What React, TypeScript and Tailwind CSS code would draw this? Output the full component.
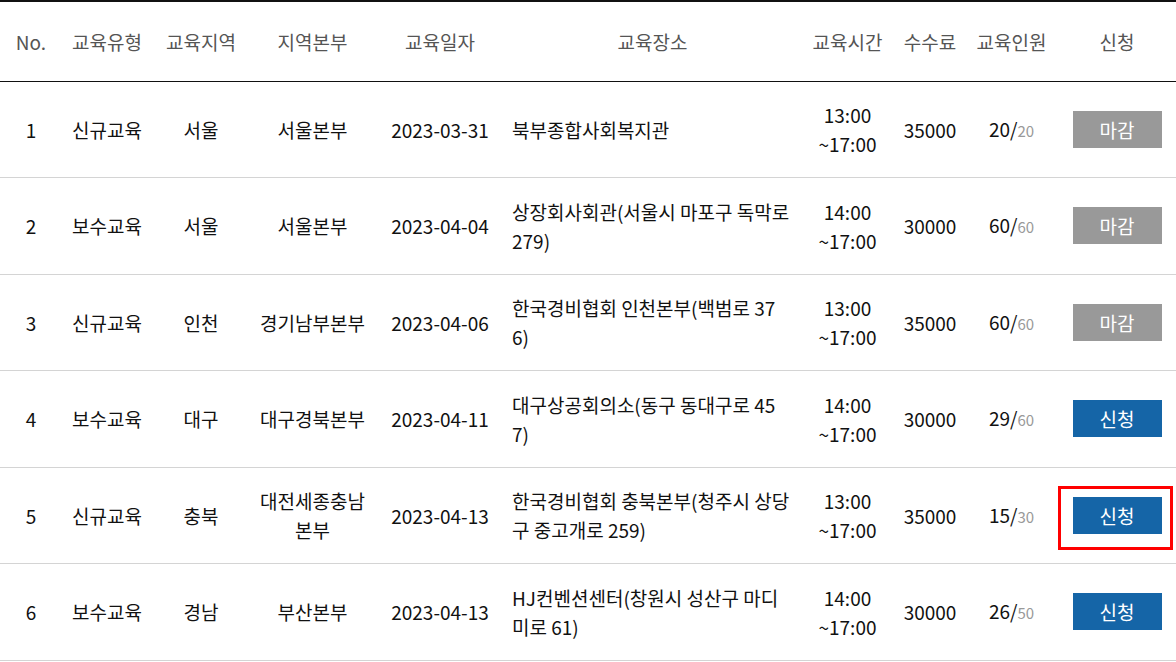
import React from "react";

type Row = {
  no: number;
  type: string;
  region: string;
  hq: string;
  date: string;
  place: string;
  start: string;
  fee: string;
  cur: string;
  max: string;
  open: boolean;
  highlight?: boolean;
};

const rows: Row[] = [
  { no: 1, type: "신규교육", region: "서울", hq: "서울본부", date: "2023-03-31", place: "북부종합사회복지관", start: "13:00", fee: "35000", cur: "20", max: "20", open: false },
  { no: 2, type: "보수교육", region: "서울", hq: "서울본부", date: "2023-04-04", place: "상장회사회관(서울시 마포구 독막로 279)", start: "14:00", fee: "30000", cur: "60", max: "60", open: false },
  { no: 3, type: "신규교육", region: "인천", hq: "경기남부본부", date: "2023-04-06", place: "한국경비협회 인천본부(백범로 376)", start: "13:00", fee: "35000", cur: "60", max: "60", open: false },
  { no: 4, type: "보수교육", region: "대구", hq: "대구경북본부", date: "2023-04-11", place: "대구상공회의소(동구 동대구로 457)", start: "14:00", fee: "30000", cur: "29", max: "60", open: true },
  { no: 5, type: "신규교육", region: "충북", hq: "대전세종충남본부", date: "2023-04-13", place: "한국경비협회 충북본부(청주시 상당구 중고개로 259)", start: "13:00", fee: "35000", cur: "15", max: "30", open: true, highlight: true },
  { no: 6, type: "보수교육", region: "경남", hq: "부산본부", date: "2023-04-13", place: "HJ컨벤션센터(창원시 성산구 마디미로 61)", start: "14:00", fee: "30000", cur: "26", max: "50", open: true },
];

const headers = ["No.", "교육유형", "교육지역", "지역본부", "교육일자", "교육장소", "교육시간", "수수료", "교육인원", "신청"];

export default function App() {
  return (
    <div
      className="w-[1176px] h-[662px] overflow-hidden bg-white"
      style={{ fontFamily: '"Noto Sans CJK KR", "Noto Sans", sans-serif' }}
    >
      <table className="w-[1176px] table-fixed border-collapse text-[19px] leading-[29px] text-[#111]">
        <colgroup>
          <col className="w-[62px]" />
          <col className="w-[90px]" />
          <col className="w-[98px]" />
          <col className="w-[125px]" />
          <col className="w-[130px]" />
          <col className="w-[295px]" />
          <col className="w-[95px]" />
          <col className="w-[70px]" />
          <col className="w-[93px]" />
          <col className="w-[118px]" />
        </colgroup>
        <thead>
          <tr className="border-t-2 border-t-[#111] border-b border-b-[#111]">
            {headers.map((h) => (
              <th key={h} className="h-[80px] p-0 text-center font-normal text-[#555] align-middle">
                {h}
              </th>
            ))}
          </tr>
        </thead>
        <tbody>
          {rows.map((r) => (
            <tr key={r.no} className="border-b border-b-[#d4d4d4]">
              <td className="h-[96.5px] p-0 text-center align-middle">{r.no}</td>
              <td className="p-0 text-center align-middle">{r.type}</td>
              <td className="p-0 text-center align-middle">{r.region}</td>
              <td className="px-[4px] text-center align-middle">{r.hq}</td>
              <td className="p-0 text-center align-middle">{r.date}</td>
              <td className="pl-[7px] pr-[10px] text-left align-middle break-all">{r.place}</td>
              <td className="p-0 text-center align-middle">
                {r.start}
                <br />~17:00
              </td>
              <td className="p-0 text-center align-middle">{r.fee}</td>
              <td className="p-0 text-center align-middle">
                {r.cur}/<span className="text-[15px] text-[#999]">{r.max}</span>
              </td>
              <td className="p-0 align-middle">
                <div className="flex justify-center">
                  <div
                    className={
                      "relative flex h-[37px] w-[89px] items-center justify-center text-white " +
                      (r.open ? "bg-[#1565a7]" : "bg-[#999999]")
                    }
                  >
                    {r.open ? "신청" : "마감"}
                    {r.highlight && (
                      <div className="absolute left-[-15px] top-[-11px] h-[64px] w-[115px] border-[3px] border-[#ff0000]" />
                    )}
                  </div>
                </div>
              </td>
            </tr>
          ))}
        </tbody>
      </table>
    </div>
  );
}
